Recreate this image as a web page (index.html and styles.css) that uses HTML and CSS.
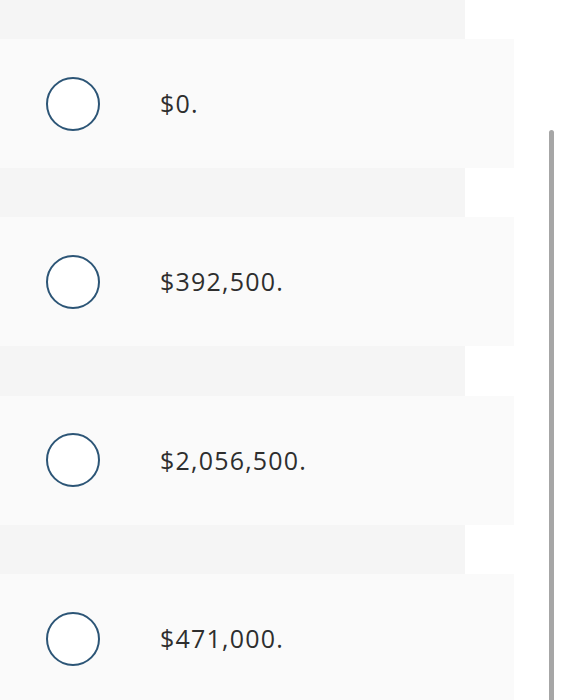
FILE: index.html
```html
<!DOCTYPE html>
<html>
<head>
<meta charset="utf-8">
<link rel="stylesheet" href="styles.css">
</head>
<body>
<div class="page">
  <ul class="choices">
    <li class="choice"><span class="radio"></span><span class="label">$0.</span></li>
    <li class="choice"><span class="radio"></span><span class="label">$392,500.</span></li>
    <li class="choice"><span class="radio"></span><span class="label">$2,056,500.</span></li>
    <li class="choice"><span class="radio"></span><span class="label">$471,000.</span></li>
  </ul>
  <div class="scrollbar"></div>
</div>
</body>
</html>
```
FILE: styles.css
```css
html, body {
  margin: 0;
  padding: 0;
  background: #ffffff;
  height: 100%;
  overflow: hidden;
}
.page {
  position: relative;
  height: 700px;
  overflow: hidden;
}
.choices {
  list-style: none;
  margin: 0;
  padding: 39px 0 0 0;
  width: 465px;
  background: #f5f5f5;
  display: flex;
  flex-direction: column;
  gap: 49.4px;
  min-height: 700px;
  box-sizing: border-box;
}
.choice {
  width: 514px;
  height: 129px;
  flex: none;
  background: #fafafa;
  display: flex;
  align-items: center;
  box-sizing: border-box;
  padding-left: 46px;
}
.radio {
  width: 54px;
  height: 54px;
  box-sizing: border-box;
  border: 2px solid #2c5576;
  border-radius: 50%;
  background: #ffffff;
  flex: none;
}
.label {
  margin-left: 60px;
  font-family: "Open Sans", "Liberation Sans", sans-serif;
  font-size: 25px;
  letter-spacing: 1.2px;
  color: #2e2e2e;
  line-height: 1;
}
.scrollbar {
  position: absolute;
  left: 549px;
  top: 130px;
  width: 5px;
  height: 600px;
  border-radius: 3px 3px 0 0;
  background: #a6a6a6;
}
```
